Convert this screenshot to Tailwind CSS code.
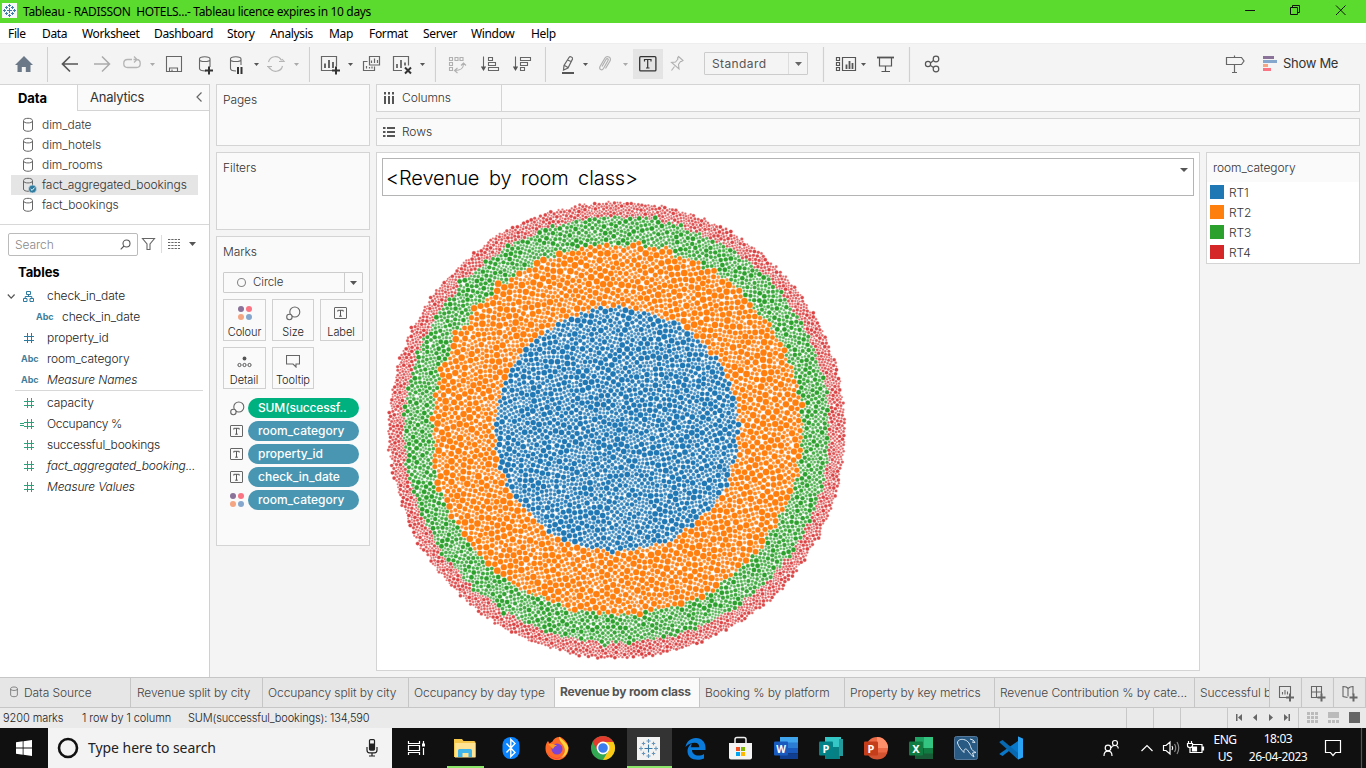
<!DOCTYPE html>
<html lang="en">
<head>
<meta charset="utf-8">
<title>Tableau - RADISSON HOTELS</title>
<script src="https://cdn.jsdelivr.net/npm/@tailwindcss/browser@4"></script>
</head>
<body class="w-[1366px] h-[768px] overflow-hidden flex flex-col bg-[#f4f4f4] font-['Inter','Noto_Sans',sans-serif] font-light text-[12px] leading-none tracking-[-0.08px] text-[#333] whitespace-nowrap">

<svg class="hidden">
  <symbol id="db" viewBox="0 0 12 16"><path d="M1.500 3.500C1.500 .6 10.500 .6 10.500 3.500V12c0 3-9 3-9 0zM1.500 4c0 2.600 9 2.600 9 0" fill="none" stroke="#666" stroke-width="1"/></symbol>
  <symbol id="hash" viewBox="0 0 12 12"><path d="M4.500 1v10M8.500 1v10M1 4.500h10M1 8.500h10" fill="none" stroke="currentColor" stroke-width="1"/></symbol>
  <symbol id="tbox" viewBox="0 0 14 13"><rect x=".5" y=".5" width="12" height="11" rx=".5" fill="none" stroke="#666"/><path d="M3.800 4.600V3.300h5.400v1.300M6.500 3.300v5.900M5.200 9.200h2.600" fill="none" stroke="#555" stroke-width="1"/></symbol>
  <symbol id="dots" viewBox="0 0 14 14"><circle cx="3" cy="3" r="3" fill="#8a7299"/><circle cx="11" cy="3" r="3" fill="#fa7484"/><circle cx="3" cy="11" r="3" fill="#f4a582"/><circle cx="11" cy="11" r="3" fill="#86a7cd"/></symbol>
  <symbol id="size" viewBox="0 0 15 15"><circle cx="8.800" cy="6" r="5" fill="none" stroke="#666" stroke-width="1.100"/><circle cx="3.400" cy="11" r="2.700" fill="#fafafa" stroke="#666" stroke-width="1.100"/></symbol>
</svg>

<!-- title bar -->
<header class="h-[23px] shrink-0 bg-[#5bdb2e] flex items-center text-black font-normal font-['Noto_Sans',sans-serif]">
  <svg width="20" height="23" viewBox="0 0 20 23"><rect x="2" y="3" width="15" height="15" fill="#f7f7f7"/><g stroke="#3d7cab" stroke-width="1"><path d="M9.500 8v5M7 10.500h5M9.500 4v3M8 5.500h3M9.500 14v3M8 15.500h3M4.500 9v3M3 10.500h3M14.500 9v3M13 10.500h3M6.500 6v3M5 7.500h3M12.500 6v3M11 7.500h3M6.500 12v3M5 13.500h3M12.500 12v3M11 13.500h3"/></g></svg>
  <span class="ml-[3px] whitespace-pre text-[12px] tracking-[-0.33px]">Tableau - RADISSON  HOTELS...- Tableau licence expires in 10 days</span>
  <svg class="ml-auto" width="126" height="23" viewBox="1240 0 126 23" fill="none" stroke="#111"><path d="M1245 10.500h10M1290.500 7.500h7v7h-7zM1292.500 7.500v-2h7v7h-2M1336 5.500l9.500 9.500M1345.500 5.500L1336 15"/></svg>
</header>

<!-- menu -->
<nav class="h-[20px] shrink-0 bg-white text-black font-normal font-['Noto_Sans',sans-serif] text-[12px] flex items-center pt-[2px] pl-2 tracking-[-0.35px]">
  <span class="w-[34px]">File</span><span class="w-[40px]">Data</span><span class="w-[72px]">Worksheet</span><span class="w-[73px]">Dashboard</span><span class="w-[43px]">Story</span><span class="w-[59px]">Analysis</span><span class="w-[40px]">Map</span><span class="w-[54px]">Format</span><span class="w-[48px]">Server</span><span class="w-[60px]">Window</span><span>Help</span>
</nav>

<!-- toolbar -->
<section class="h-[41px] shrink-0 flex border-t border-[#eee]">
  <svg width="48" height="40" viewBox="0 44 48 40"><path d="M24 56l9 9h-2.500v7h-4.700v-5h-4v5H17.500v-7H15z" fill="#6b7888"/><path d="M47.500 47v35" stroke="#d0d0d0"/></svg>
  <svg width="112" height="40" viewBox="48 44 112 40" fill="none"><path d="M78 64H63.500M70 56.500L62.500 64l7.500 7.500" stroke="#555" stroke-width="1.700"/><path d="M94 64h14.500M102 56.500l7.500 7.500-7.500 7.500" stroke="#aaa" stroke-width="1.500"/><path d="M132 59.500h-4.500c-5 0-5 8 0 8h9c5 0 5-8 0-8h-3M134 56.500l3 3-3 3" stroke="#b5b5b5" stroke-width="1.300"/><path d="M150 63h5l-2.500 3z" fill="#aaa"/></svg>
  <svg width="150" height="40" viewBox="160 44 150 40" fill="none" stroke="#666" stroke-width="1.100"><path d="M166.500 56.500h15v15h-15zM169.500 71.500v-3.500h8v3.500M172 71.500v-2"/><path d="M206 71c-4 0-6.500-1-6.500-2.500V59c0-3 10.500-3 10.500 0v8M199.500 59.500c0 2.700 10.500 2.700 10.500 0"/><path d="M205 70.500h8M209 66.500v8" stroke="#333" stroke-width="2"/><path d="M236 71c-3.500 0-5.500-1-5.500-2.500V59c0-3 10.500-3 10.500 0v6M230.500 59.500c0 2.700 10.500 2.700 10.500 0"/><path d="M238 67v7M241.500 67v7" stroke="#333" stroke-width="2"/><path d="M254 63h5l-2.500 3z" fill="#555" stroke="none"/><g stroke="#b5b5b5" stroke-width="1.200"><path d="M268.500 62a7 7 0 0 1 13-1.500M282.500 66a7 7 0 0 1-13 1.500M279 61.500h5l-2-2.500M267 66.500h5M268 66.500l2 2.500"/></g><path d="M294 63h5l-2.500 3z" fill="#aaa" stroke="none"/><path d="M309.500 47v35" stroke="#d0d0d0"/></svg>
  <svg width="126" height="40" viewBox="310 44 126 40" fill="none" stroke="#666" stroke-width="1.200"><path d="M333 70.500h-11.500v-14h15v10"/><path d="M325 63.500v4.500M329 60v8M333 62v6" stroke-width="2"/><path d="M332 70.500h8M336 66.500v8" stroke="#333" stroke-width="2"/><path d="M348 63h5l-2.500 3z" fill="#555" stroke="none"/><path d="M369.500 56.500h10v8.500h-10zM367.500 61.500h-4v9h11v-4M371.500 60.500v2.500M374.500 58.500v4.500M377.500 60v3M366.500 66v2.500M369.500 67v1.500M372 66.500v2"/><path d="M402 70.500h-8.500v-14h15v9"/><path d="M397 64v4M401 60v8M405 62.500v3" stroke-width="1.800"/><path d="M405 67.500l6 6M411 67.500l-6 6" stroke="#333" stroke-width="2"/><path d="M420 63h5l-2.500 3z" fill="#555" stroke="none"/><path d="M435.500 47v35" stroke="#d0d0d0"/></svg>
  <svg width="110" height="40" viewBox="436 44 110 40" fill="none" stroke="#666" stroke-width="1.100"><g stroke="#b0b0b0"><path d="M449.500 57.500h3v3h-3zM455 57.500h3v3h-3zM460 57.500h3v3h-3zM449.500 62.500h3v3h-3zM449.500 67.500h3v3h-3zM455 70.500c5 0 8.500-1 8.500-7M457.500 68l-3 2.500 3 2.500M461 65.500l2.500-2.500 2.500 2.500"/></g><path d="M483.500 56.500v12M488.500 57.500h4v3h-4zM488.500 62.500h7v3h-7zM488.500 67.500h10v3h-10zM515.500 56.500v12M520.500 57.500h10v3h-10zM520.500 62.500h7v3h-7zM520.500 67.500h4v3h-4z"/><path d="M480.800 66.500h5.400l-2.700 4.500zM512.800 66.500h5.400l-2.700 4.500z" fill="#555" stroke="none"/><path d="M545.500 47v35" stroke="#d0d0d0"/></svg>
  <svg width="87" height="40" viewBox="546 44 87 40" fill="none" stroke="#666" stroke-width="1.200"><path d="M569 57.500c1-1.500 4-.5 3.500 1.500l-4.500 9-4.500 2 .5-4.500zM567.500 60l3.500 1.500M564.500 65.500l3.500 2"/><path d="M562 73h12" stroke="#555" stroke-width="2"/><path d="M583 63h5l-2.500 3z" fill="#555" stroke="none"/><path d="M602 66.500l4-7c1-1.500 3-.5 2 1l-4.500 8c-1.500 2.500-5 1-3.500-2l5-8.500c2-3 7-.5 5 3l-4.500 7.500" stroke="#b0b0b0"/><path d="M623 63h5l-2.500 3z" fill="#aaa" stroke="none"/></svg>
  <div class="w-[30px] h-[30px] mt-[5px] bg-[#e4e4e4] flex items-center justify-center"><svg width="18" height="16" viewBox="0 0 18 16" fill="none" stroke="#333"><rect x=".7" y=".7" width="16.200" height="14.200" rx="1" stroke-width="1.300"/><path d="M5.500 5.500v-2h6.500v2M8.700 3.500v8.500M7 12h3.500" stroke-width="1.200"/></svg></div>
  <svg width="41" height="40" viewBox="663 44 41 40" fill="none" stroke="#b0b0b0" stroke-width="1.100"><path d="M678.500 56.500l4.500 4-1.500 1-1 0-2 3 .5 4.500-7.500-6.500 4-.5 2.500-3-.5-1zM674.500 66.500l-3 4"/></svg>
  <div class="w-[104px] h-[23px] mt-[8px] border border-[#ccc] flex items-center text-[12px] text-[#555] pl-[7px] rounded-[1px] font-normal"><span class="tracking-[0.4px]">Standard</span><span class="ml-auto w-[19px] h-full border-l border-[#ddd] flex items-center justify-center"><svg width="7" height="4"><path d="M0 0h7L3.500 4z" fill="#666"/></svg></span></div>
  <svg width="172" height="40" viewBox="808 44 172 40" fill="none" stroke="#555" stroke-width="1.200"><path d="M823.500 47v35M909.500 47v35" stroke="#d0d0d0"/><path d="M836.500 57.500h3v3h-3zM836.500 62.500h3v3h-3zM836.500 67.500h3v3h-3zM842.500 57.500h13v13h-13z"/><path d="M846.500 64.500v4.500M849.500 61v8M852.500 63v6" stroke-width="1.800"/><path d="M861 63h5l-2.500 3z" fill="#555" stroke="none"/><path d="M877 57.500h17" stroke-width="1.800"/><path d="M879.500 57.500v8.500h12v-8.500M885.500 66v5M881.500 71.500h8.500"/><circle cx="928" cy="64" r="2.600"/><circle cx="936" cy="59" r="2.800"/><circle cx="936" cy="69" r="2.800"/><path d="M930.500 63l3-2.500M930.500 65.500l3 2"/></svg>
  <svg class="ml-auto" width="66" height="40" viewBox="1217 44 66 40" fill="none" stroke="#666" stroke-width="1.200"><path d="M1226.500 57.500h15l2.500 3.500-2.500 3.500h-15zM1234.500 55.500v2M1234.500 64.500v8M1232 72.500h5"/><g stroke="none"><path d="M1263 56h11v3h-11z" fill="#8a7299"/><path d="M1263 60h14v3h-14z" fill="#86a7cd"/><path d="M1263 64h5v3h-5z" fill="#f4a582"/><path d="M1263 68h8v3h-8z" fill="#fa7484"/></g></svg>
  <span class="w-[83px] pt-[13px] text-[13px] text-[#333] font-normal tracking-[-0.3px]">Show Me</span>
</section>

<main class="h-[593px] shrink-0 flex">
  <!-- data pane -->
  <aside class="w-[210px] bg-white border-r border-[#d0d0d0] flex flex-col">
    <div class="h-[27px] flex border-t border-[#d4d4d4] shrink-0">
      <div class="w-[77px] flex items-center pl-[18px] text-[13px] font-bold text-black tracking-[-0.1px]">Data</div>
      <div class="flex-1 flex items-center pl-3 pr-[7px] text-[13px] font-normal tracking-[-0.25px] bg-[#fafafa] border-l border-b border-[#d4d4d4]"><span>Analytics</span><svg class="ml-auto -mt-[2px]" width="6" height="10" fill="none" stroke="#666" stroke-width="1.200"><path d="M5.500 .5L1 5l4.500 4.500"/></svg></div>
    </div>
    <div class="h-[114px] pt-1 border-b border-[#d8d8d8] text-[#333] shrink-0">
      <div class="h-5 mx-[11px] pl-[11px] flex items-center gap-2"><svg width="12" height="16"><use href="#db"/></svg>dim_date</div>
      <div class="h-5 mx-[11px] pl-[11px] flex items-center gap-2"><svg width="12" height="16"><use href="#db"/></svg>dim_hotels</div>
      <div class="h-5 mx-[11px] pl-[11px] flex items-center gap-2"><svg width="12" height="16"><use href="#db"/></svg>dim_rooms</div>
      <div class="h-5 mx-[11px] pl-[11px] flex items-center gap-2 bg-[#e5e5e5]"><svg class="overflow-visible" width="12" height="16"><use href="#db"/><circle cx="10.500" cy="12" r="4" fill="#2e7ba0" stroke="#e5e5e5" stroke-width=".6"/><path d="M8.700 12l1.400 1.400 2.400-2.800" stroke="#fff" fill="none"/></svg>fact_aggregated_bookings</div>
      <div class="h-5 mx-[11px] pl-[11px] flex items-center gap-2"><svg width="12" height="16"><use href="#db"/></svg>fact_bookings</div>
    </div>
    <div class="mt-2 h-[23px] pl-2 flex items-center shrink-0">
      <div class="w-[130px] h-[23px] border border-[#bbb] rounded-[2px] flex items-center pl-[6px] pr-[6px] text-[#888]">Search<svg class="ml-auto" width="11" height="11" fill="none" stroke="#555" stroke-width="1.100"><circle cx="6.500" cy="4.500" r="3.500"/><path d="M4 7L.7 10.300"/></svg></div>
      <svg width="60" height="23" viewBox="138 233 60 23" fill="none" stroke="#666" stroke-width="1.100"><path d="M142.500 238.500h12l-4.500 5.500v5.500h-3v-5.500z"/><path d="M161.500 235v18" stroke="#ddd"/><path d="M168 239.500h12M168 242.500h12M168 245.500h12M168 248.500h12" stroke-dasharray="2.300 1"/><path d="M189 242h7l-3.500 4z" fill="#555" stroke="none"/></svg>
    </div>
    <div class="h-[29px] pt-[10px] pl-[18px] text-[13px] font-bold text-black shrink-0">Tables</div>
    <div class="text-[#222]">
      <div class="h-[21px] flex items-center"><svg class="mr-[12px] ml-[7px]" width="28" height="12" fill="none"><path d="M.8 4.500l3.400 3.700 3.400-3.700" stroke="#555" stroke-width="1.200"/><g stroke="#2e7ba0"><path d="M19.500 1.500h4v3h-4zM16.500 8.500h3.500v3h-3.500zM23 8.500h3.500v3H23zM21.500 4.500v2M18.200 8.500V6.500h6.600v2"/></g></svg>check_in_date</div>
      <div class="h-[21px] flex items-center pl-[36px]"><span class="w-[26px] text-[9px] font-bold text-[#3f7f9c]">Abc</span>check_in_date</div>
      <div class="h-[21px] flex items-center pl-[23px]"><svg class="mr-[12px] text-[#2e7ba0]" width="12" height="12"><use href="#hash"/></svg>property_id</div>
      <div class="h-[21px] flex items-center pl-[21px]"><span class="w-[26px] text-[9px] font-bold text-[#3f7f9c]">Abc</span>room_category</div>
      <div class="h-[21px] flex items-center pl-[21px]"><span class="w-[26px] text-[9px] font-bold text-[#3f7f9c]">Abc</span><i class="tracking-[-0.15px]">Measure Names</i></div>
      <div class="ml-[15px] mr-[6px] border-b border-[#d8d8d8] mb-[1px]"></div>
      <div class="h-[21px] flex items-center pl-[23px]"><svg class="mr-[12px] text-[#2fa07c]" width="12" height="12"><use href="#hash"/></svg>capacity</div>
      <div class="h-[21px] flex items-center pl-[19px]"><svg class="mr-[12px] text-[#2fa07c]" width="16" height="12"><path d="M1 5.500h4M1 7.500h4" stroke="currentColor"/><use href="#hash" x="4" width="12" height="12"/></svg><span class="tracking-[-0.3px]">Occupancy %</span></div>
      <div class="h-[21px] flex items-center pl-[23px]"><svg class="mr-[12px] text-[#2fa07c]" width="12" height="12"><use href="#hash"/></svg><span class="tracking-[-0.2px]">successful_bookings</span></div>
      <div class="h-[21px] flex items-center pl-[23px]"><svg class="mr-[12px] text-[#2fa07c]" width="12" height="12"><use href="#hash"/></svg><i class="tracking-[-0.15px]">fact_aggregated_booking...</i></div>
      <div class="h-[21px] flex items-center pl-[23px]"><svg class="mr-[12px] text-[#2fa07c]" width="12" height="12"><use href="#hash"/></svg><i class="tracking-[-0.15px]">Measure Values</i></div>
    </div>
  </aside>

  <!-- cards -->
  <div class="w-[160px] pl-[6px] flex flex-col gap-[6px] text-[#333]">
    <div class="h-[62px] border border-[#d4d4d4] bg-[#fafafa] pl-[6px] pt-[9px]">Pages</div>
    <div class="h-[78px] border border-[#d4d4d4] bg-[#fafafa] pl-[6px] pt-[9px]">Filters</div>
    <div class="h-[310px] border border-[#d4d4d4] bg-[#fafafa] px-[6px] pt-[9px]">
      <div class="h-[26px]">Marks</div>
      <div class="h-[21px] border border-[#ccc] rounded-[1px] flex items-center pl-3"><svg width="11" height="11"><circle cx="5.500" cy="5.500" r="4" fill="none" stroke="#888" stroke-width="1.100"/></svg><span class="ml-[6px] pt-[1px] text-[11.500px]">Circle</span><span class="ml-auto w-[18px] h-full border-l border-[#ccc] flex items-center justify-center"><svg width="7" height="4"><path d="M0 0h7L3.500 4z" fill="#555"/></svg></span></div>
      <div class="mt-[6px] grid grid-cols-[43px_42px_43px] gap-x-[6px] gap-y-[6px] text-[11px] text-[#222]">
        <div class="h-[42px] border border-[#d0d0d0] flex flex-col items-center pt-[6px]"><svg width="14" height="14"><use href="#dots"/></svg><span class="mt-[7px]">Colour</span></div>
        <div class="h-[42px] border border-[#d0d0d0] flex flex-col items-center pt-[6px]"><svg width="15" height="15"><use href="#size"/></svg><span class="mt-[6px]">Size</span></div>
        <div class="h-[42px] border border-[#d0d0d0] flex flex-col items-center pt-[7px] pr-[1px]"><svg width="14" height="13"><use href="#tbox"/></svg><span class="mt-[7px]">Label</span></div>
        <div class="h-[42px] border border-[#d0d0d0] flex flex-col items-center pt-[7px] pr-[1px]"><svg width="15" height="13" fill="none" stroke="#555"><circle cx="7.500" cy="3.500" r="1.900" fill="#555" stroke="none"/><circle cx="2.500" cy="10" r="1.600"/><circle cx="7.500" cy="10" r="1.600"/><circle cx="12.500" cy="10" r="1.600"/></svg><span class="mt-[7px]">Detail</span></div>
        <div class="h-[42px] border border-[#d0d0d0] flex flex-col items-center pt-[6px]"><svg width="14" height="14" fill="none" stroke="#666" stroke-width="1.100"><path d="M.5 1.500h13v8.500H10v3L7 10H.5z"/></svg><span class="mt-[7px]">Tooltip</span></div>
      </div>
      <div class="mt-[9px] flex flex-col gap-[3px] pl-[7px] text-white font-medium tracking-[0px]">
        <div class="h-5 flex items-center"><svg class="mr-[3px]" width="15" height="15"><use href="#size"/></svg><span class="w-[111px] h-5 rounded-full bg-[#00b180] pl-[10px] leading-[19px] tracking-[-0.15px]">SUM(successf..</span></div>
        <div class="h-5 flex items-center"><svg class="mr-[4px]" width="14" height="13"><use href="#tbox"/></svg><span class="w-[111px] h-5 rounded-full bg-[#4996b2] pl-[10px] leading-[19px]">room_category</span></div>
        <div class="h-5 flex items-center"><svg class="mr-[4px]" width="14" height="13"><use href="#tbox"/></svg><span class="w-[111px] h-5 rounded-full bg-[#4996b2] pl-[10px] leading-[19px]">property_id</span></div>
        <div class="h-5 flex items-center"><svg class="mr-[4px]" width="14" height="13"><use href="#tbox"/></svg><span class="w-[111px] h-5 rounded-full bg-[#4996b2] pl-[10px] leading-[19px]">check_in_date</span></div>
        <div class="h-5 flex items-center"><svg class="mr-[4px]" width="14" height="14"><use href="#dots"/></svg><span class="w-[111px] h-5 rounded-full bg-[#4996b2] pl-[10px] leading-[19px]">room_category</span></div>
      </div>
    </div>
  </div>

  <!-- worksheet -->
  <div class="flex-1 px-[6px] flex flex-col gap-[6px] text-[#333]">
    <div class="h-[28px] shrink-0 border border-[#d4d4d4] bg-[#fafafa] flex"><div class="w-[125px] border-r border-[#d4d4d4] flex items-center pl-[6px]"><svg class="mr-[7px]" width="12" height="12"><path d="M2 0v2.500M2 4v8M6 0v2.500M6 4v8M10 0v2.500M10 4v8" stroke="#555" stroke-width="2"/></svg>Columns</div></div>
    <div class="h-[28px] shrink-0 border border-[#d4d4d4] bg-[#fafafa] flex"><div class="w-[125px] border-r border-[#d4d4d4] flex items-center pl-[6px]"><svg class="mr-[7px]" width="12" height="12"><path d="M0 2h2.500M4 2h8M0 6h2.500M4 6h8M0 10h2.500M4 10h8" stroke="#555" stroke-width="2"/></svg>Rows</div></div>
    <div class="flex gap-[6px]">
      <div class="w-[824px] h-[519px] border border-[#d4d4d4] bg-white p-[5px]">
        <div class="h-[38px] border border-[#b4b4b4] flex justify-between pl-[3px] pr-[5px] text-[20px] font-light text-black"><span class="pt-[9px] tracking-[-0.1px] [word-spacing:4px]">&lt;Revenue by room class&gt;</span><svg class="mt-[9px]" width="8" height="4"><path d="M0 0h8L4 4z" fill="#555"/></svg></div>
        <canvas id="bubbles" width="480" height="470" class="block"></canvas>
      </div>
      <div class="w-[154px] h-[112px] border border-[#d4d4d4] bg-white">
        <div class="h-[29px] bg-[#fafafa] pl-[6px] pt-[9px]">room_category</div>
        <div class="h-5 pl-[3px] flex items-center gap-[5px]"><span class="w-[14px] h-[14px] bg-[#1f77b4]"></span><span class="pt-[2px]">RT1</span></div>
        <div class="h-5 pl-[3px] flex items-center gap-[5px]"><span class="w-[14px] h-[14px] bg-[#ff7f0e]"></span><span class="pt-[2px]">RT2</span></div>
        <div class="h-5 pl-[3px] flex items-center gap-[5px]"><span class="w-[14px] h-[14px] bg-[#2ca02c]"></span><span class="pt-[2px]">RT3</span></div>
        <div class="h-5 pl-[3px] flex items-center gap-[5px]"><span class="w-[14px] h-[14px] bg-[#d62728]"></span><span class="pt-[2px]">RT4</span></div>
      </div>
    </div>
  </div>
</main>

<!-- sheet tabs -->
<section class="h-[31px] shrink-0 flex bg-[#e6e6e6] border-t border-b border-[#c6c6c6] text-[#444] [&>div]:border-r [&>div]:border-[#c6c6c6] [&>div]:flex [&>div]:items-center [&>div]:overflow-hidden">
  <div class="w-[131px] pl-[9px]"><svg class="mr-[5px] mb-[2px]" width="10" height="12" viewBox="0 0 12 16"><use href="#db"/></svg>Data Source</div>
  <div class="w-[132px] pl-[6px]">Revenue split by city</div>
  <div class="w-[146px] pl-[5px]">Occupancy split by city</div>
  <div class="w-[146px] pl-[5px]">Occupancy by day type</div>
  <div class="w-[145px] pl-[5px] bg-[#fafafa] font-bold text-[#555] pb-[2px] tracking-[-0.2px]">Revenue by room class</div>
  <div class="w-[145px] pl-[5px]">Booking % by platform</div>
  <div class="w-[150px] pl-[5px]">Property by key metrics</div>
  <div class="w-[200px] pl-[5px]">Revenue Contribution % by cate...</div>
  <div class="w-[75px] pl-[5px]">Successful b</div>
  <svg width="96" height="29" viewBox="1270 678 96 29" fill="none" stroke="#666" stroke-width="1.100"><path d="M1301.500 678v29M1333.500 678v29M1365.500 678v29" stroke="#c6c6c6"/><path d="M1287 697.500h-7.500v-11h11v8M1282.500 692v2.500M1285 690v4.500M1287.500 691.500v3M1319 697.500h-7.500v-11h10v8M1311.500 692h10M1316.500 686.500v11M1347.500 697.500l-4.500-1v-10c3 0 4.500 1 5 2 1-1 2.500-2 5-2v8M1348 688.500v8"/><path d="M1286 697.500h8M1290 693.500v8M1317.500 697.500h8M1321.500 693.500v8M1349.500 697.500h8M1353.500 693.500v8" stroke-width="2"/></svg>
</section>

<!-- status -->
<section class="h-[20px] shrink-0 bg-[#eaeaea] flex items-center pl-[3px] text-[11px] text-[#222]">
  <span class="w-[79px]">9200 marks</span><span class="w-[106px]">1 row by 1 column</span><span class="tracking-[-0.15px]">SUM(successful_bookings): 134,590</span>
  <svg class="ml-auto" width="376" height="20" viewBox="990 708 376 20"><path d="M999.500 708v20M1126.500 708v20M1153.500 708v20M1180.500 708v20M1227.500 708v20M1298.500 708v20" stroke="#c8c8c8"/><g fill="#666"><path d="M1236 714h1.500v7h-1.500zM1242 714v7l-4-3.500zM1257 714v7l-4-3.500zM1269 714v7l4-3.500zM1284 714v7l4-3.500zM1288.500 714h1.500v7h-1.500zM1349 712h11v11h-11z"/></g><g stroke="#bbb" stroke-width="3"><path d="M1307 713.500h11M1307 717.500h11M1307 721.500h11M1328 721.500h11" stroke-dasharray="3 1"/><path d="M1328 715h11" stroke-width="6"/></g></svg>
</section>

<!-- taskbar -->
<footer class="h-[40px] shrink-0 bg-[#101010] flex text-white font-normal font-['Noto_Sans',sans-serif]">
  <svg width="48" height="40" viewBox="0 728 48 40" fill="#fff"><path d="M16 742.300l6.700-1v6.300H16zM23.500 741.200l8.500-1.200v7.600h-8.500zM16 748.500h6.700v6.300l-6.700-1zM23.500 748.500H32v7.600l-8.500-1.300z"/></svg>
  <div class="w-[344px] bg-[#f3f3f3] flex items-center pl-[9px] text-[#222] text-[14px]"><svg width="22" height="22"><circle cx="11" cy="11" r="9" fill="none" stroke="#111" stroke-width="2.600"/></svg><span class="ml-[9px] tracking-[-0.05px]">Type here to search</span><svg class="ml-auto mr-[14px]" width="12" height="18" fill="none" stroke="#222" stroke-width="1.200"><rect x="3.500" y=".6" width="5" height="10.500" rx="1"/><path d="M4 5h4v5.500H4z" fill="#222"/><path d="M1 8v3c0 1.500 1 2.800 2.500 2.800h5c1.500 0 2.500-1.300 2.500-2.800V8M6 14v3M3 17h6"/></svg></div>
  <svg width="235" height="40" viewBox="392 728 235 40"><g fill="none" stroke="#fff" stroke-width="1.200"><path d="M408.500 741v2.500h11V741M408.500 745.500h11v5h-11zM408.500 755v-2.500h11v2.500M423.500 741v4M423.500 748v7"/></g><path d="M422 743.500h3v3h-3z" fill="#fff"/>
    <path d="M454 739h8l1.500 2H474a1.500 1.500 0 0 1 1.500 1.500V757H454z" fill="#f5c84c"/><path d="M455 743h20.500v14.500h-20.500z" fill="#ffe394"/><path d="M458 757v-6.500q0-1.500 1.500-1.500h11q1.500 0 1.500 1.500v6.500h-3.500v-4h-6v4z" fill="#3fb4e8"/><path d="M447 766h37v2h-37z" fill="#8ce66a"/>
    <rect x="502.500" y="737" width="17" height="22" rx="8" fill="#0a84ff"/><path d="M506.500 743.500l8.500 9-4.200 4V739.500l4.200 4-8.500 9" fill="none" stroke="#fff" stroke-width="1.400"/>
    <g><path d="M545.500 748c0-3 .8-5 2.500-7l1.500 2.500 3-2c1-3 4.500-5 8-4.500 4 2.500 8 6 8 11.500a11.500 11.500 0 0 1-23 0z" fill="#ff6a28"/><path d="M559 736.500c3.500 4 7.500 5.500 9.300 11 0 5-4 11-10 11.200 5-1.700 8-7 6-11.200-1-4-5-5-5.300-11z" fill="#ffd43b"/><path d="M547 752c3 7 13 9 18 3a11.500 11.500 0 0 1-18-3z" fill="#f02b66"/><circle cx="557" cy="749" r="5.500" fill="#7d45d6"/><path d="M548 744l5 0 4 1.500c-3 1-3 2-4 3.500z" fill="#ff9b25"/></g>
    <g><circle cx="603" cy="748" r="12" fill="#32a852"/><path d="M592.600 742A12 12 0 0 1 613.400 742H603l-5.200 9z" fill="#e33b2e"/><path d="M613.400 742A12 12 0 0 1 603 760l5.200-9-5.200-9z" fill="#fbc816"/><circle cx="603" cy="748" r="5.600" fill="#3b7ded" stroke="#fff" stroke-width="1.600"/></g>
  </svg>
  <div class="w-[45px] bg-[#333] border-b-2 border-[#8ce66a] flex items-center justify-center pr-[2px] pt-[2px]"><svg width="23" height="23"><rect width="23" height="23" fill="#f2f2f2"/><g stroke="#3a78a8" stroke-width="1.100"><path d="M11.500 7.500v8M7.500 11.500h8"/><g stroke-opacity=".75"><path d="M11.500 2v4M9.500 4h4M11.500 17v4M9.500 19h4M4 9.500v4M2 11.500h4M19 9.500v4M17 11.500h4M6.500 4.800v3.500M4.800 6.500h3.500M16.500 4.800v3.500M14.800 6.500h3.500M6.500 14.800v3.500M4.800 16.500h3.500M16.500 14.800v3.500M14.800 16.500h3.500"/></g></g></svg></div>
  <svg width="363" height="40" viewBox="672 728 363 40">
    <path d="M685.500 747c1-5.500 5-9 10.500-9 6 0 9.500 4.500 9.500 9.500v2.500h-13.500c0 3.500 3 5.500 6.500 5.500 2 0 4-.5 5.500-1.500v4.500c-2 1-4 1.300-6.500 1.300-6 0-10-3.500-10-8.500 0-4 2.500-7 5-8-1 1-1.600 2.300-1.700 4h8.500c0-2.700-1.500-4.500-4.500-4.500-4 0-7.300 2-9.300 4.200z" fill="#0a7bdb"/>
    <path d="M735 744v-4.500q0-2 2-2h7q2 0 2 2v4.500" fill="none" stroke="#eee" stroke-width="1.500"/><path d="M729 743h23v14.500q0 2-2 2h-19q-2 0-2-2z" fill="#f4f4f4"/><path d="M736 747h4v4h-4z" fill="#f25022"/><path d="M741 747h4v4h-4z" fill="#7fba00"/><path d="M736 752h4v4h-4z" fill="#00a4ef"/><path d="M741 752h4v4h-4z" fill="#ffb900"/>
    <g><path d="M780 737h18v6h-18z" fill="#41a5ee"/><path d="M780 742.500h18v6h-18z" fill="#2b7cd3"/><path d="M780 748h18v5.500h-18z" fill="#185abd"/><path d="M780 753.500h18v5.500h-18z" fill="#103f91"/><rect x="774" y="741.500" width="14" height="14" rx="1" fill="#185abd"/></g>
    <g><path d="M825 737h16v10h-16z" fill="#35c6c6"/><path d="M825 747h15v12h-15z" fill="#078083"/><path d="M839 739h4v17h-4z" fill="#24999b"/><rect x="819" y="741.500" width="14" height="14" rx="1" fill="#038387"/></g>
    <g><circle cx="877" cy="748" r="11" fill="#ed6c47"/><path d="M877 737a11 11 0 0 1 11 11h-11z" fill="#ff8f6b"/><path d="M867 752.500h20.500a11 11 0 0 1-20.500 0z" fill="#d35230"/><rect x="864" y="741.500" width="14" height="14" rx="1" fill="#c43e1c"/></g>
    <g><path d="M915 737h9v11h-9z" fill="#21a366"/><path d="M924 737h9v11h-9z" fill="#33c481"/><path d="M915 748h18v11h-18z" fill="#185c37"/><path d="M924 748h9v5.500h-9z" fill="#107c41"/><rect x="909" y="741.500" width="14" height="14" rx="1" fill="#107c41"/></g>
    <g font-family="Noto Sans, sans-serif" font-weight="bold" font-size="11" fill="#fff" text-anchor="middle"><text x="781" y="752.500" font-size="10">W</text><text x="826" y="752.500">P</text><text x="871" y="752.500">P</text><text x="916" y="752.500">X</text></g>
    <g><rect x="954.500" y="736.500" width="23" height="23" rx="2" fill="#285a84" stroke="#55789a"/><path d="M957.500 743c0-3 3-4 6-3.500 5 1 6.500 5 7.500 8.500 1 2.500 3 3.500 5 4.500l-3.500.5 1.500 4c-3-2-5-4.500-6.500-7-2-2-4-1-3.500 2.500-2.500-2.500-5.500-6-6.500-9.500zM970 739l3 1 2 2.500-3-.5" fill="none" stroke="#dce8f2" stroke-width="1"/></g>
    <g><path d="M1018 736.500l5 2.300v18.400l-5 2.300-9-8.500-6.500 5-3-1.800v-.5L1018 741z" fill="#0a78c8"/><path d="M999.500 741.800l3-1.800 15.500 13v6l-18.500-16.500z" fill="#0868b0"/><path d="M1018 736.500l5 2.300v18.400l-5 2.300z" fill="#2ba3f5"/></g>
  </svg>
  <svg class="ml-auto" width="116" height="40" viewBox="1094 728 116 40" fill="none" stroke="#fff" stroke-width="1.200"><circle cx="1115" cy="743" r="2.500"/><path d="M1111.500 748c0-1.500 1.500-2.500 3.500-2.500s3.200 1.500 3.200 3"/><circle cx="1108" cy="748" r="2.800"/><path d="M1104 756c0-3 1.800-4.800 4-4.800s4 1.800 4 4.800"/><path d="M1141.500 751l5.500-5.500 5.500 5.500"/><path d="M1163.500 745.500h2.500l4-3.500v12l-4-3.500h-2.500zM1172 746q1.500 2 0 4"/><path d="M1174.500 744q2.500 4 0 8M1177 742q3.500 6 0 12" stroke="#888"/><path d="M1193 744.500h9v8h-12v-3M1202.500 747h1v3h-1zM1188.500 741v2.500M1191.500 741v2.500M1187.500 743.500h5v2q0 2-2.500 2t-2.500-2zM1190 748v4.500"/><path d="M1192.500 747h4v4h-4z" fill="#fff"/></svg>
  <div class="w-[30px] flex flex-col items-center gap-[5px] pt-[6px] text-[12px] leading-[12px] tracking-[-0.5px]"><span>ENG</span><span>US</span></div>
  <div class="w-[76px] flex flex-col items-center gap-[6px] pt-[5px] text-[12px] leading-[12px] tracking-[-0.4px]"><span>18:03</span><span>26-04-2023</span></div>
  <svg width="50" height="40" viewBox="1316 728 50 40" fill="none" stroke="#fff" stroke-width="1.200"><path d="M1325.500 740.500h15v12h-5l-2.500 3-2.500-3h-5z"/><path d="M1361.500 728v40" stroke="#555"/></svg>
</footer>

<script>
// Packed bubbles: 2300 marks for each of the four room categories, packed outward with a front chain.
const COLORS = ['#1f77b4', '#ff7f0e', '#2ca02c', '#d62728'];
const EDGES = [123.5, 187.5, 215.5, 230.5], N = 2300;
let seed = 7;
const rnd = () => { seed = (seed * 1664525 + 1013904223) >>> 0; return seed / 4294967296; };

function place(b, a, c) {
  const dx = b.x - a.x, dy = b.y - a.y, d2 = dx * dx + dy * dy;
  const a2 = (a.r + c.r) ** 2, b2 = (b.r + c.r) ** 2;
  if (a2 > b2) {
    const x = (d2 + b2 - a2) / (2 * d2), y = Math.sqrt(Math.max(0, b2 / d2 - x * x));
    c.x = b.x - x * dx - y * dy; c.y = b.y - x * dy + y * dx;
  } else {
    const x = (d2 + a2 - b2) / (2 * d2), y = Math.sqrt(Math.max(0, a2 / d2 - x * x));
    c.x = a.x + x * dx - y * dy; c.y = a.y + x * dy + y * dx;
  }
}
const hits = (a, b) => { const dr = a.r + b.r - 1e-6, dx = b.x - a.x, dy = b.y - a.y; return dr > 0 && dr * dr > dx * dx + dy * dy; };
function score(n) {
  const a = n._, b = n.next._, ab = a.r + b.r;
  const dx = (a.x * b.r + b.x * a.r) / ab, dy = (a.y * b.r + b.y * a.r) / ab;
  return dx * dx + dy * dy;
}
function pack(cs) {
  let a = cs[0], b = cs[1], c = cs[2];
  a.x = -b.r; b.x = a.r; a.y = b.y = 0;
  place(b, a, c);
  a = { _: a }; b = { _: b }; c = { _: c };
  a.next = c.previous = b; b.next = a.previous = c; c.next = b.previous = a;
  outer: for (let i = 3; i < cs.length; i++) {
    place(a._, b._, c = cs[i]);
    c = { _: c };
    let j = b.next, k = a.previous, sj = b._.r, sk = a._.r;
    do {
      if (sj <= sk) {
        if (hits(j._, c._)) { b = j; a.next = b; b.previous = a; i--; continue outer; }
        sj += j._.r; j = j.next;
      } else {
        if (hits(k._, c._)) { a = k; a.next = b; b.previous = a; i--; continue outer; }
        sk += k._.r; k = k.previous;
      }
    } while (j !== k.next);
    c.previous = a; c.next = b; a.next = b.previous = b = c;
    let best = score(a), n = c;
    while ((n = n.next) !== b) { const s = score(n); if (s < best) { a = n; best = s; } }
    b = a.next;
  }
}
const base = [];
for (let i = 0; i < 4 * N; i++) base.push(0.65 + 0.65 * Math.pow(rnd(), 1.5));
const mean = [2.35, 2.7, 2.08, 1.5];
let cs;
for (let pass = 0; pass < 4; pass++) {
  cs = base.map((v, i) => ({ r: v * mean[i / N | 0], k: i / N | 0 }));
  pack(cs);
  let prevGot = 0, prevWant = 0;
  for (let k = 0; k < 4; k++) {
    const g = cs.slice(k * N, k * N + N), d = g.map(c => Math.hypot(c.x, c.y)).sort((p, q) => p - q);
    const got = d[N - 12] ** 2, want = (EDGES[k] - 1.5) ** 2;
    if (pass < 3) mean[k] *= Math.sqrt((want - prevWant) / Math.max(1, got - prevGot));
    prevGot = got; prevWant = want;
  }
}
const ctx = document.getElementById('bubbles').getContext('2d');
ctx.translate(617 - 382, 430 - 196);
for (const c of cs) {
  // pale rim around a solid core; the smallest marks stay pale
  ctx.fillStyle = COLORS[c.k];
  ctx.globalAlpha = 0.38;
  ctx.beginPath(); ctx.arc(c.x, c.y, c.r, 0, 7); ctx.fill();
  ctx.globalAlpha = Math.max(0.45, Math.min(1, 0.5 + 0.4 * (c.r - 1.35)));
  ctx.beginPath(); ctx.arc(c.x, c.y, Math.max(0.8, c.r - 0.45), 0, 7); ctx.fill();
}
</script>
</body>
</html>
